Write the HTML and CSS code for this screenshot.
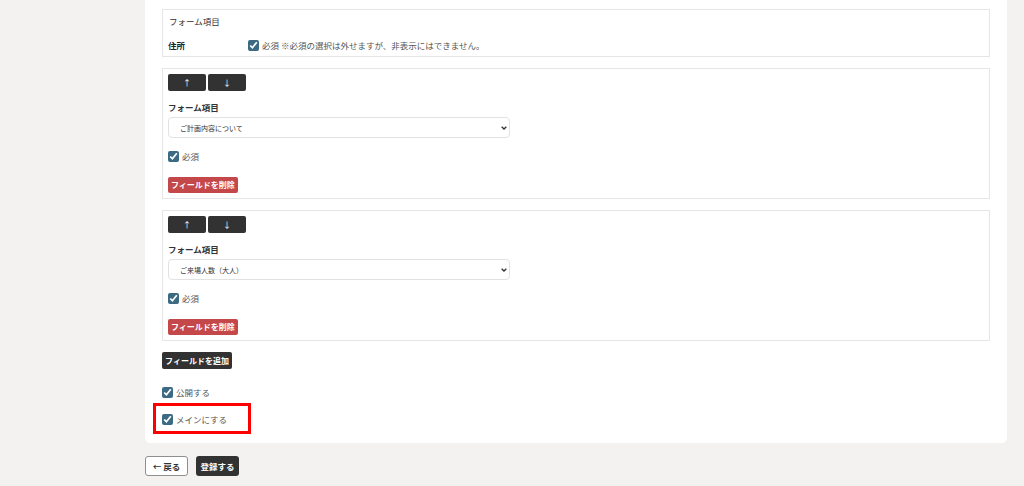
FILE: index.html
```html
<!DOCTYPE html>
<html lang="ja">
<head>
<meta charset="utf-8">
<title>フォーム編集</title>
<link rel="stylesheet" href="styles.css">
</head>
<body>
<main class="page">
  <section class="card">
    <div class="panel panel-fixed">
      <div class="panel-title">フォーム項目</div>
      <div class="fixed-row">
        <span class="fixed-label">住所</span>
        <label class="check"><input type="checkbox" checked><span>必須 ※必須の選択は外せますが、非表示にはできません。</span></label>
      </div>
    </div>

    <div class="panel">
      <div class="move-btns">
        <button class="btn btn-dark btn-move" type="button">↑</button>
        <button class="btn btn-dark btn-move" type="button">↓</button>
      </div>
      <div class="field-label">フォーム項目</div>
      <div class="select-wrap">
        <select class="field-select">
          <option>ご計画内容について</option>
        </select>
        <svg class="select-arrow" width="6" height="4" viewBox="0 0 6 4" aria-hidden="true"><polyline points="0.7,0.7 3,3 5.3,0.7" fill="none" stroke="#333" stroke-width="1.4"/></svg>
      </div>
      <label class="check check-row"><input type="checkbox" checked><span>必須</span></label>
      <button class="btn btn-danger" type="button">フィールドを削除</button>
    </div>

    <div class="panel">
      <div class="move-btns">
        <button class="btn btn-dark btn-move" type="button">↑</button>
        <button class="btn btn-dark btn-move" type="button">↓</button>
      </div>
      <div class="field-label">フォーム項目</div>
      <div class="select-wrap">
        <select class="field-select">
          <option>ご来場人数（大人）</option>
        </select>
        <svg class="select-arrow" width="6" height="4" viewBox="0 0 6 4" aria-hidden="true"><polyline points="0.7,0.7 3,3 5.3,0.7" fill="none" stroke="#333" stroke-width="1.4"/></svg>
      </div>
      <label class="check check-row"><input type="checkbox" checked><span>必須</span></label>
      <button class="btn btn-danger" type="button">フィールドを削除</button>
    </div>

    <button class="btn btn-dark btn-add" type="button">フィールドを追加</button>

    <label class="check option-row option-public"><input type="checkbox" checked><span>公開する</span></label>
    <div class="option-main">
      <label class="check option-row"><input type="checkbox" checked><span>メインにする</span></label>
      <span class="highlight"></span>
    </div>
  </section>

  <div class="actions">
    <button class="btn btn-outline btn-lg" type="button">← 戻る</button>
    <button class="btn btn-dark btn-lg" type="button">登録する</button>
  </div>
</main>
</body>
</html>
```

FILE: styles.css
```css
* {
  box-sizing: border-box;
}

html, body {
  margin: 0;
  padding: 0;
}

body {
  background: #f3f2f0;
  font-family: "Noto Sans CJK JP", "Noto Sans", sans-serif;
  color: #333;
  font-size: 8.5px;
}

.page {
  width: 862px;
  margin-left: 145px;
}

.card {
  background: #fff;
  border-radius: 0 0 5px 5px;
  padding: 9px 17px 17px;
}

.panel {
  border: 1px solid #e6e6e6;
  padding: 5px;
  margin-bottom: 11px;
}

.panel-title {
  line-height: 13px;
  height: 13px;
  padding-left: 1px;
  color: #333;
}

.fixed-row {
  display: flex;
  align-items: center;
  height: 12px;
  margin-top: 11px;
}

.fixed-label {
  width: 80px;
  font-weight: 700;
  color: #222;
}

.check {
  display: flex;
  align-items: center;
  gap: 3px;
  color: #555;
  line-height: 13px;
}

.check input {
  width: 11px;
  height: 11px;
  margin: 0;
  accent-color: #3b6a82;
}

.move-btns {
  display: flex;
  gap: 2px;
  height: 17px;
}

.btn {
  font-family: "Noto Sans CJK JP", "Noto Sans", sans-serif;
  border: none;
  border-radius: 2px;
  font-weight: 700;
  font-size: 8px;
  line-height: 1;
  padding: 0 3px;
  cursor: pointer;
  display: inline-flex;
  align-items: center;
  justify-content: center;
}

.btn-dark {
  background: #323232;
  color: #fff;
}

.btn-move {
  width: 38px;
  height: 17px;
  font-size: 8px;
  font-weight: 400;
}

.field-label {
  margin-top: 10px;
  line-height: 13px;
  height: 13px;
  font-weight: 700;
  color: #333;
}

.select-wrap {
  position: relative;
  margin-top: 3px;
  width: 342px;
}

.field-select {
  display: block;
  width: 100%;
  height: 21px;
  border: 1px solid #e2e2e2;
  border-radius: 4px;
  background: #fff;
  font-family: "Noto Sans CJK JP", "Noto Sans", sans-serif;
  font-size: 7px;
  color: #333;
  padding: 0 14px 0 11px;
  appearance: none;
  -webkit-appearance: none;
}

.select-arrow {
  position: absolute;
  right: 3px;
  top: 9px;
  pointer-events: none;
}

.check-row {
  margin-top: 12px;
  height: 13px;
}

.btn-danger {
  margin-top: 14px;
  height: 16px;
  background: #c4474a;
  color: #fff;
}

.btn-add {
  height: 17px;
  width: 70px;
  padding: 0;
}

.option-row {
  height: 14px;
}

.option-public {
  margin-top: 16px;
}

.option-main {
  position: relative;
  margin-top: 13px;
}

.highlight {
  position: absolute;
  left: -9px;
  top: -9px;
  width: 98px;
  height: 31px;
  border: 3px solid #ff0000;
  pointer-events: none;
}

.actions {
  display: flex;
  gap: 8px;
  margin-top: 13px;
}

.btn-lg {
  height: 20px;
  width: 43px;
  font-size: 8.5px;
  border-radius: 3px;
}

.btn-outline {
  background: #fff;
  color: #333;
  border: 1px solid #8f8f8f;
}
```
